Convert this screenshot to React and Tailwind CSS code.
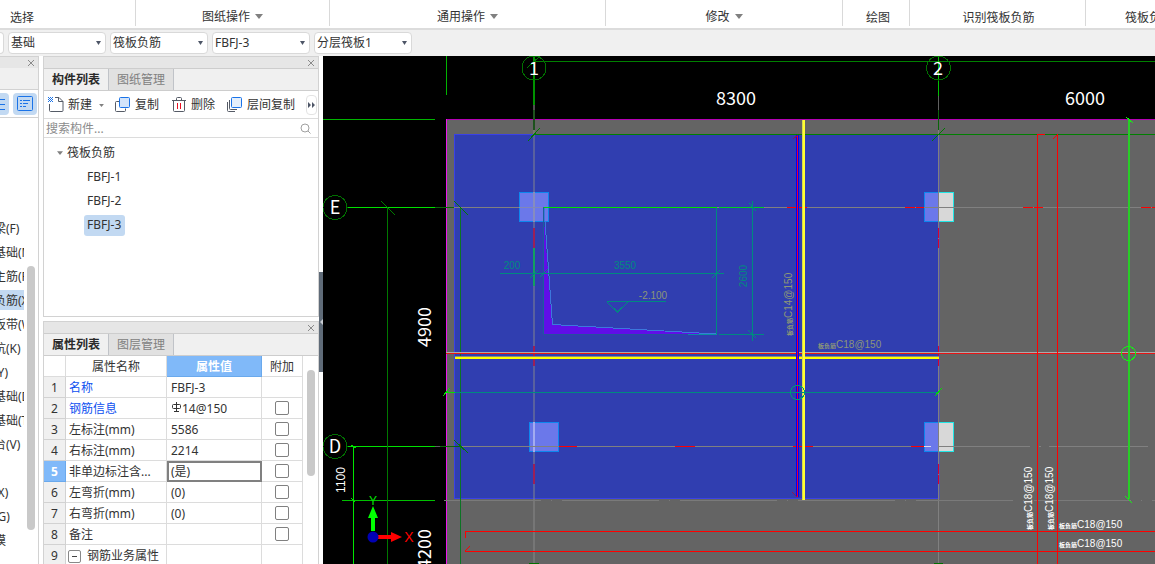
import React from "react";

const groups = [
  { label: "选择", box: "w-[136px] pl-[10px]" },
  { label: "图纸操作", menu: true, box: "w-[194px] justify-center" },
  { label: "通用操作", menu: true, box: "w-[276px] justify-center" },
  { label: "修改", menu: true, box: "w-[237px] justify-center" },
  { label: "绘图", box: "w-[67px] justify-center pl-[4px]" },
  { label: "识别筏板负筋", box: "w-[176px] justify-center pl-[2px]" },
  { label: "筏板负筋二次编辑", box: "flex-1 pl-[39px]" },
];

const pickers = [
  { name: "楼层", value: "基础" },
  { name: "构件类型", value: "筏板负筋" },
  { name: "构件", value: "FBFJ-3" },
  { name: "分层", value: "分层筏板1" },
];

const nav = [
  "基础梁(F)", "筏板基础(M)", "筏板主筋(R)", "筏板负筋(X)", "基础板带(W)", "集水坑(K)", "柱墩(Y)",
  "独立基础(D)", "条形基础(T)", "桩承台(V)", "其它", "垫层(X)", "地沟(G)", "砖胎模",
];

const props = [
  { name: "名称", value: "FBFJ-3", link: true, box: false },
  { name: "钢筋信息", value: "14@150", link: true, box: true, bar: true },
  { name: "左标注(mm)", value: "5586", box: true },
  { name: "右标注(mm)", value: "2214", box: true },
  { name: "非单边标注含...", value: "(是)", box: true, active: true },
  { name: "左弯折(mm)", value: "(0)", box: true },
  { name: "右弯折(mm)", value: "(0)", box: true },
  { name: "备注", value: "", box: true },
  { name: "钢筋业务属性", value: "", box: false, group: true },
];

function Caret({ className }) {
  return (
    <svg width="8" height="5" viewBox="0 0 8 5" className={className} aria-hidden="true">
      <path d="M0 0h8L4 5z" fill="currentColor" />
    </svg>
  );
}

function CloseBar({ label }) {
  return (
    <div className="flex h-[12px] shrink-0 items-center justify-end border-t border-[#d2d2d2] bg-[#e6e6e6] pr-[3px]">
      <button aria-label={label} className="text-[#8a8a8a]">
        <svg width="8" height="8" viewBox="0 0 8 8" aria-hidden="true">
          <path d="M1 1l6 6M7 1L1 7" stroke="currentColor" fill="none" />
        </svg>
      </button>
    </div>
  );
}

function Tabs({ items }) {
  return (
    <div role="tablist" className="flex h-[23px] shrink-0 border-y border-[#cdcdcd] bg-[#f0f0f0]">
      {items.map((t, i) => (
        <button
          key={t}
          role="tab"
          aria-selected={i === 0}
          className={
            i === 0
              ? "w-[65px] border-r border-[#c0c3c8] bg-[#f0f0f0] font-bold text-[#2a2a2a]"
              : "w-[65px] border-r border-[#c0c3c8] bg-[#e1e1e1] text-[#808080]"
          }
        >
          {t}
        </button>
      ))}
    </div>
  );
}

function NewIcon() {
  return (
    <svg width="16" height="16" viewBox="0 0 16 16" fill="none" aria-hidden="true">
      <path d="M7 .5h4l4 4v9q0 1-1 1H2.500q-1 0-1-1V7" stroke="#555b66" />
      <path d="M10.500 .5v4h4.500" stroke="#555b66" />
      <path d="M0 0h1v1H0zM2 0h1v1H2zM4 0h1v1H4zM1 1h1v1H1zM3 1h1v1H3zM0 2h1v1H0zM2 2h1v1H2zM4 2h1v1H4zM1 3h1v1H1zM3 3h1v1H3zM0 4h1v1H0zM2 4h1v1H2zM4 4h1v1H4z" fill="#1a73e8" />
    </svg>
  );
}

function CopyIcon() {
  return (
    <svg width="16" height="16" viewBox="0 0 16 16" fill="none" aria-hidden="true">
      <path d="M4.500 4.500h-3q-1 0-1 1v8q0 1 1 1h8q1 0 1-1v-2" stroke="#555b66" />
      <rect x="4.500" y=".5" width="10" height="10" rx="1" fill="#d3e4fa" stroke="#1a73e8" />
    </svg>
  );
}

function LayerCopyIcon() {
  return (
    <svg width="16" height="16" viewBox="0 0 16 16" fill="none" aria-hidden="true">
      <path d="M.5 5v8.500q0 1 1 1H8M2.500 3v8.500q0 1 1 1H10" stroke="#555b66" />
      <rect x="4.500" y=".5" width="10" height="10" rx="1" fill="#e4effc" stroke="#1a73e8" />
    </svg>
  );
}

function TrashIcon() {
  return (
    <svg width="14" height="16" viewBox="0 0 14 16" fill="none" aria-hidden="true">
      <path d="M0 3.500h14M4.500 3V1.500q0-1 1-1h3q1 0 1 1V3M1.500 4v9.500q0 1 1 1h9q1 0 1-1V4" stroke="#555b66" />
      <path d="M5.500 6v6M8.500 6v6" stroke="#e81123" />
    </svg>
  );
}

function H({ x, to, y, w = 1, c }) {
  return <rect x={x} y={y} width={to - x} height={w} fill={c} />;
}

function V({ x, y, to, w = 1, c }) {
  return <rect x={x} y={y} width={w} height={to - y} fill={c} />;
}

function Tick({ d, c = "#007a00", w = 1 }) {
  return <path d={d} stroke={c} strokeWidth={w} fill="none" />;
}

const dim = { fontFamily: '"Noto Sans CJK SC", "Noto Sans", sans-serif', fontSize: 18, fill: "#fff" };
const cad = { fontFamily: '"Liberation Sans", sans-serif', fontSize: 10 };

function RebarNote({ x, y, upright, kind, color }) {
  return (
    <g transform={upright ? `translate(${x} ${y}) rotate(-90)` : `translate(${x} ${y})`} fill={color}>
      <text style={cad}>
        <tspan style={{ fontFamily: '"Noto Sans CJK SC", sans-serif', fontSize: 6, fontWeight: 700 }}>板负筋</tspan>
        {kind}@150
      </text>
    </g>
  );
}

function Plan() {
  const gray = "#808080";
  const teal = "#008a80";
  const lime = "#00e000";
  const red = "#ff0000";
  return (
    <svg className="block h-full w-full" role="img" aria-label="筏板负筋平面图">
      <g transform="translate(-323 -56)" shapeRendering="crispEdges">
        <rect x="447" y="120" width="3000" height="3000" fill="#646464" />
        <rect x="454" y="135" width="485" height="364" fill="#303eb0" />
        <V x={454} y={134} to={499} c="#3a41e6" />
        <H x={454} to={534} y={134} c="#3a41e6" />
        <H x={454} to={939} y={498} c="#3a41e6" />
        <V x={939} y={135} to={499} c="#5555a4" />
        <H x={446} to={3000} y={119} c="#b400b4" />
        <V x={446} y={119} to={3000} c="#f014f0" />
        <V x={446} y={56} to={95} c="#00b400" />
        <H x={323} to={435} y={119} c="#00b400" />

        <H x={534} to={3000} y={61} c="#008000" />
        <H x={534} to={3000} y={134} c="#008000" />
        <V x={533} w={2} y={56} to={105} c="#009200" />
        <V x={533} w={2} y={105} to={110} c="#505050" />
        <V x={533} w={2} y={110} to={130} c="#1d521d" />
        <V x={533} w={2} y={130} to={3000} c="rgba(140,140,140,0.45)" />
        <V x={533} w={2} y={228} to={248} c="#9c2058" />
        <V x={533} w={2} y={248} to={286} c="#12a060" />
        <V x={533} w={2} y={346} to={366} c="#9c2058" />
        <V x={533} w={2} y={464} to={484} c="#9c2058" />
        <V x={938} y={56} to={96} c="#00c000" />
        <V x={938} y={96} to={110} c="#606060" />
        <V x={938} y={110} to={130} c="#0a640a" />
        <V x={938} y={130} to={3000} c={gray} />

        <H x={347} to={435} y={207} c={lime} />
        <H x={435} to={454} y={207} c="#0a640a" />
        <H x={454} to={3000} y={207} c={gray} />
        <H x={347} to={435} y={446} c={lime} />
        <H x={435} to={440} y={446} c="#606060" />
        <H x={440} to={461} y={446} c="#0a640a" />
        <H x={461} to={1030} y={446} c={gray} />
        <H x={1039} to={1041} y={446} c={gray} />
        <H x={1049} to={1148} y={446} c={gray} />
        <H x={342} to={435} y={500} c="#00c000" />
        <path d="M444 500.5H3000" stroke="#7a7a7a" strokeDasharray="97 10 1 10" />
        <V x={353} y={446} to={3000} c="#00e600" />
        <V x={387} y={207} to={3000} c="#007800" />
        <V x={460} y={207} to={3000} c="#0c7424" />
        <Tick d="M381 201l14 14M454 201l14 14M454 440l14 13" />
        <Tick d="M528 141l12-13M932 141l13-13M527 68l13-12" />
        <Tick d="M351 445l5 3M351 498l4 4" c={lime} />

        <g stroke="none">
          <rect x="519" y="192" width="30" height="30" fill="#0d86ee" />
          <rect x="520" y="193" width="28" height="28" fill="#6b78ea" />
          <rect x="529" y="422" width="30" height="30" fill="#0d86ee" />
          <rect x="530" y="423" width="28" height="28" fill="#6b78ea" />
          {[192, 422].map((y) => (
            <g key={y}>
              <rect x="924" y={y} width="15" height="30" fill="#0d86ee" />
              <rect x="925" y={y + 1} width="14" height="28" fill="#6b78ea" />
              <rect x="939" y={y} width="15" height="30" fill="#20e6e6" />
              <rect x="939" y={y + 1} width="14" height="28" fill="#d8d8d8" />
            </g>
          ))}
        </g>
        <V x={533} w={2} y={192} to={222} c="#868cc0" />
        <V x={533} w={2} y={422} to={452} c="#a3abf0" />
        <H x={519} to={549} y={207} c="#8088b8" />
        <H x={529} to={559} y={446} c={gray} />
        <V x={938} y={192} to={222} c={gray} />
        <V x={938} y={422} to={452} c={gray} />
        <H x={924} to={954} y={207} c={gray} />
        <H x={939} to={954} y={446} c={gray} />
        <H x={924} to={931} y={446} c="#dadaf0" />

        {[787, 905, 1023, 1141].map((x) => (
          <g key={x}>
            <H x={x} to={x + 10} y={207} c={red} />
            <H x={x + 11} to={x === 905 ? 924 : x + 20} y={207} c={red} />
          </g>
        ))}
        <H x={559} to={577} y={446} c={red} />
        {[675, 793].map((x) => (
          <H key={x} x={x} to={x + 20} y={446} c={red} />
        ))}
        <H x={911} to={924} y={446} c={red} />
        {[228, 346, 464].map((y) => (
          <g key={y}>
            <V x={938} y={y} to={y + 10} c="#d80030" />
            <V x={938} y={y + 11} to={y + 20} c="#d80030" />
          </g>
        ))}

        <path d="M543 207L552 325L716 334H543z" fill="#600ee8" />
        <path d="M544 207L552.5 324.500L716 334" stroke="#3c78dc" fill="none" />
        <V x={543} y={207} to={334} c="#1a5f9c" />
        <V x={716} y={207} to={335} c={teal} />
        <H x={543} to={716} y={334} c="#2550a0" />
        <H x={688} to={717} y={334} c="#0a90a0" />
        <H x={544} to={717} y={207} c={lime} />
        <H x={719} to={764} y={207} c="#00d020" />
        <H x={719} to={764} y={334} c={teal} />
        <V x={752} y={201} to={341} c={teal} />
        <H x={500} to={724} y={273} c={teal} />
        <Tick d="M530 278l8-8M540 277l8-8M712 278l8-8M749 203l7 8M748 330l8 8" c={teal} />
        <H x={607} to={666} y={301} c={teal} />
        <Tick d="M607 302l10.500 10l10.500-10" c={teal} />

        <H x={446} to={3000} y={352} c="#aaaaaa" />
        <H x={446} to={3000} y={353} c="#e81414" />
        <H x={455} to={939} y={356} c="#8c8c78" />
        <H x={455} to={939} y={357} w={2} c="#ffff00" />
        <V x={796} w={3} y={135} to={497} c="#0000ff" />
        <V x={797} y={135} to={497} c="#f00020" />
        <V x={802} w={3} y={120} to={500} c="#ffff30" />
        <V x={802} y={120} to={500} c="#d8d850" />
        <Tick d="M793 139l5-4M792 492l5 5" c="#8c145a" />
        <H x={446} to={455} y={392} c={lime} />
        <H x={455} to={939} y={392} c={teal} />
        <Tick d="M443 396l7-8M935 396l7-8" c={lime} />
        <circle cx="797.5" cy="392.5" r="7" fill="none" stroke="#009a74" />

        <V x={1037} y={134} to={3000} c={red} />
        <V x={1057} y={134} to={3000} c={red} />
        <H x={1037} to={1045} y={134} c={red} />
        <H x={465} to={3000} y={531} c={red} />
        <H x={465} to={3000} y={551} c={red} />
        <V x={465} y={531} to={538} c={red} />
        <Tick d="M1053 139l5-5M465 551l5-5" c={red} />
        <V x={1128} w={2} y={120} to={499} c="#28cd28" />
        <Tick d="M1126 117l7 6M1125 496l7 7" c="#14f014" />
        <circle cx="1128.5" cy="353.5" r="7" fill="none" stroke="#14f014" />

        <g fill="none" stroke="#007000">
          <circle cx="534" cy="68" r="12" />
          <circle cx="938.5" cy="68" r="12" />
          <circle cx="335" cy="207.5" r="12" />
          <circle cx="335" cy="446.5" r="12" />
          <circle cx="534" cy="575" r="12" />
          <circle cx="938.5" cy="575" r="12" />
        </g>

        <g shapeRendering="geometricPrecision">
          <path d="M371 531V518h-3l5-12l5 12h-3v13z" fill="#00ff00" />
          <path d="M378 535h13v-3l11 5l-11 5v-3h-13z" fill="#ff0000" />
          <circle cx="373" cy="537" r="5.500" fill="#0000b4" />
        </g>
      </g>
      <g transform="translate(-323 -56)" textAnchor="middle">
        <text x="534" y="75" style={dim}>1</text>
        <text x="938" y="75" style={dim}>2</text>
        <text x="335" y="214" style={dim}>E</text>
        <text x="335" y="453" style={dim}>D</text>
        <text x="736" y="105" style={dim}>8300</text>
        <text x="1085" y="105" style={dim}>6000</text>
        <text transform="translate(431 327) rotate(-90)" style={dim}>4900</text>
        <text transform="translate(431 549) rotate(-90)" style={dim}>4200</text>
        <text transform="translate(345 480) rotate(-90)" style={{ ...cad, fontSize: 12 }} fill="#fff">1100</text>
        <text x="373" y="505" style={{ ...cad, fontSize: 12 }} fill="#00e600">Y</text>
        <text x="409" y="542" style={{ ...cad, fontSize: 14 }} fill="#ff0000">X</text>
        <text x="512" y="269" style={cad} fill={teal}>200</text>
        <text x="625" y="269" style={cad} fill={teal}>3550</text>
        <text x="653" y="299" style={cad} fill="#8c9678">-2.100</text>
        <text transform="translate(747 276) rotate(-90)" style={cad} fill={teal}>2600</text>
      </g>
      <g transform="translate(-323 -56)">
        <RebarNote x={792} y={336} upright kind="C14" color="#8c9678" />
        <RebarNote x={818} y={348} kind="C18" color="#8c9678" />
        <RebarNote x={1032} y={530} upright kind="C18" color="#fff" />
        <RebarNote x={1053} y={530} upright kind="C18" color="#fff" />
        <RebarNote x={1059} y={528} kind="C18" color="#fff" />
        <RebarNote x={1059} y={547} kind="C18" color="#fff" />
      </g>
    </svg>
  );
}

export default function App() {
  return (
    <div className="flex h-screen flex-col overflow-hidden bg-white font-['Noto_Sans','Noto_Sans_CJK_SC',sans-serif] text-[12px] leading-[16px] text-[#333333]">
      <header className="flex h-[30px] shrink-0 border-b-2 border-[#dcdcdc] bg-white">
        {groups.map((g, i) => (
          <div
            key={g.label}
            className={`flex h-[26px] shrink-0 items-center overflow-hidden whitespace-nowrap ${g.menu ? "pt-[7px]" : "pt-[9px]"} ${g.box} ${i < groups.length - 1 ? "border-r border-[#d9d9d9]" : ""}`}
          >
            {g.menu ? (
              <button className="flex items-center gap-[5px]">
                {g.label}
                <Caret className="text-[#808080]" />
              </button>
            ) : (
              <span>{g.label}</span>
            )}
          </div>
        ))}
      </header>

      <div className="flex h-[26px] shrink-0 items-center gap-1 bg-[#f0f0f0]">
        <span className="-ml-px h-[22px] w-[5px] rounded-r border border-l-0 border-[#d9d9d9] bg-white" />
        {pickers.map((p) => (
          <div key={p.name} className="relative">
            <select
              aria-label={p.name}
              defaultValue={p.value}
              className="block h-[22px] w-[98px] appearance-none rounded border border-[#d9d9d9] bg-white pl-[2px]"
            >
              <option>{p.value}</option>
            </select>
            <svg width="5" height="4" viewBox="0 0 5 4" className="pointer-events-none absolute top-[9px] right-[5px]" aria-hidden="true">
              <path d="M0 0h5L2.500 4z" fill="#4d5566" />
            </svg>
          </div>
        ))}
      </div>

      <main className="flex min-h-0 flex-1">
        <aside className="flex w-[39px] shrink-0 flex-col border-r border-[#d2d2d2]">
          <CloseBar label="关闭模块导航" />
          <div className="h-[22px] shrink-0 border-b border-[#d2d2d2] bg-[#f0f0f0]" />
          <div className="flex h-[28px] shrink-0 items-center gap-1 border-b border-[#d2d2d2]">
            <button aria-label="图标视图" className="flex h-[22px] w-[9px] items-center justify-end overflow-hidden rounded-r bg-[#c2d9f2] pr-1">
              <svg width="5" height="14" viewBox="0 0 5 14" aria-hidden="true">
                <path d="M0 2.500h5M0 7.500h5M0 12.500h5" stroke="#1a73e8" />
              </svg>
            </button>
            <button aria-label="列表视图" className="flex h-[22px] w-[24px] items-center justify-center rounded bg-[#c2d9f2]">
              <svg width="16" height="16" viewBox="0 0 16 16" fill="none" stroke="#1a73e8" aria-hidden="true">
                <rect x=".5" y=".5" width="15" height="14" rx="1" />
                <path d="M3 4.500h2M6 4.500h7M3 7.500h2M6 7.500h5M3 10.500h2M6 10.500h3" />
              </svg>
            </button>
          </div>
          <div className="flex min-h-0 flex-1 pt-[98px]">
            <ul className="w-[24px] shrink-0 overflow-hidden whitespace-nowrap">
              {nav.map((n, i) => (
                <li key={n} className={i === 3 ? "my-[2px] flex h-[20px] items-center bg-[#c2d9f2] pt-[2px]" : "flex h-[24px] items-center pt-[2px]"}>
                  <span className="-ml-[30px]">{n}</span>
                </li>
              ))}
            </ul>
            <div className="mt-[50px] ml-[3px] h-[264px] w-[8px] shrink-0 rounded-full bg-[#c9c9c9]" />
          </div>
        </aside>

        <div className="ml-1 flex w-[276px] shrink-0 flex-col gap-1">
          <section className="flex h-[261px] shrink-0 flex-col border border-t-0 border-[#d2d2d2]">
            <CloseBar label="关闭构件列表" />
            <Tabs items={["构件列表", "图纸管理"]} />
            <div className="flex h-[28px] shrink-0 items-center border-b border-[#dcdcdc] pt-px pl-[4px] whitespace-nowrap">
              <button className="flex items-center gap-[4px]"><NewIcon />新建</button>
              <Caret className="ml-[7px] h-[3px] w-[5px] text-[#808080]" />
              <button className="ml-[11px] flex items-center gap-[4px]"><CopyIcon />复制</button>
              <button className="ml-[13px] flex items-center gap-[5px]"><TrashIcon />删除</button>
              <button className="ml-[12px] flex items-center gap-[4px]"><LayerCopyIcon />层间复制</button>
              <button aria-label="更多" className="mr-px ml-auto flex h-[20px] w-[11px] items-center justify-center rounded border border-[#e3e3e3]">
                <svg width="7" height="6" viewBox="0 0 7 6" aria-hidden="true">
                  <path d="M0 0l3 3l-3 3zM4 0l3 3l-3 3z" fill="#4d5566" />
                </svg>
              </button>
            </div>
            <div className="flex h-[19px] shrink-0 items-center border-b border-[#dcdcdc] pt-px pr-[7px] pl-[2px]">
              <input aria-label="搜索构件" placeholder="搜索构件..." className="h-[16px] min-w-0 flex-1 bg-transparent outline-none placeholder:text-[#8c8c8c]" />
              <svg width="11" height="11" viewBox="0 0 11 11" fill="none" stroke="#a0a0a0" aria-hidden="true">
                <circle cx="5" cy="5" r="4" />
                <path d="M8 8l2.500 2.500" />
              </svg>
            </div>
            <div className="flex flex-col items-start pt-[3px]">
              <div className="flex h-[24px] items-center gap-[4px] pl-[13px]">
                <Caret className="h-[4px] w-[6px] text-[#808080]" />
                筏板负筋
              </div>
              {["FBFJ-1", "FBFJ-2", "FBFJ-3"].map((n, i) => (
                <div key={n} className="flex h-[24px] items-center pl-[40px]">
                  <button className={i === 2 ? "h-[21px] rounded-[3px] bg-[#c2d9f2] pr-[4px] pl-[3px]" : "h-[21px] px-[3px]"}>{n}</button>
                </div>
              ))}
            </div>
          </section>

          <section className="flex min-h-0 flex-1 flex-col overflow-hidden border-x border-[#d2d2d2]">
            <CloseBar label="关闭属性列表" />
            <Tabs items={["属性列表", "图层管理"]} />
            <div className="flex min-h-0 flex-1 overflow-hidden">
              <table className="h-fit w-[259px] shrink-0 table-fixed border-separate border-spacing-0 leading-[16px]">
                <colgroup>
                  <col className="w-[22px]" />
                  <col className="w-[101px]" />
                  <col className="w-[95px]" />
                  <col className="w-[41px]" />
                </colgroup>
                <thead>
                  <tr className="h-[21px]">
                    <th className="border-r border-b border-[#dcdcdc] p-0" aria-label="序号" />
                    <th className="border-r border-b border-[#dcdcdc] p-0 pt-px font-normal">属性名称</th>
                    <th className="border-r border-b border-[#6aa9ec] bg-[#80b9f9] p-0 pt-px font-bold text-white">属性值</th>
                    <th className="border-r border-b border-[#dcdcdc] p-0 pt-px font-normal">附加</th>
                  </tr>
                </thead>
                <tbody>
                  {props.map((p, i) => (
                    <tr key={p.name} className="h-[21px]">
                      <td className={p.active ? "border-r border-b border-[#6aa9ec] bg-[#80b9f9] p-0 pt-px text-center font-bold text-white" : "border-r border-b border-[#d2d2d2] bg-[#f0f0f0] p-0 pt-px text-center"}>
                        {i + 1}
                      </td>
                      <td className={`border-r border-b border-[#dcdcdc] p-0 pt-[2px] pl-[3px] whitespace-nowrap ${p.link ? "text-[#0d50f0]" : ""}`}>
                        {p.group ? (
                          <span className="flex items-center gap-[5px]">
                            <button aria-label="折叠" className="flex h-[13px] w-[13px] -translate-x-px items-center justify-center rounded-[2px] border border-[#888888] bg-white">
                              <span className="h-px w-[5px] bg-[#444444]" />
                            </button>
                            {p.name}
                          </span>
                        ) : (
                          p.name
                        )}
                      </td>
                      <td className={p.active ? "border-2 border-[#808080] p-0 pl-[2px]" : "border-r border-b border-[#dcdcdc] p-0 pt-px pl-[4px]"}>
                        {p.bar ? (
                          <span className="flex items-center gap-px">
                            <svg width="10" height="11" viewBox="0 0 10 11" fill="none" stroke="#333333" className="mb-[3px]" aria-hidden="true">
                              <path d="M5.500 0v10M1.500 3.500q0-1 1-1h6q1 0 1 1v2q0 1-1 1h-6q-1 0-1-1zM3 9.500h5" />
                            </svg>
                            {p.value}
                          </span>
                        ) : (
                          p.value
                        )}
                      </td>
                      <td className="border-r border-b border-[#dcdcdc] p-0">
                        {p.box && (
                          <input type="checkbox" aria-label={`${p.name} 附加`} className="mx-auto block h-[14px] w-[14px] appearance-none rounded-[2px] border border-[#808080] bg-white checked:bg-[#80b9f9]" />
                        )}
                      </td>
                    </tr>
                  ))}
                </tbody>
              </table>
              <div className="mt-[14px] ml-[4px] h-[106px] w-[8px] rounded-full bg-[#c9c9c9]" />
            </div>
          </section>
        </div>

        <div className="flex w-[4px] shrink-0 flex-col pt-[216px]">
          <button aria-label="收起面板" className="flex h-[100px] w-[4px] items-center justify-end bg-[#5f6b78]">
            <svg width="3" height="6" viewBox="0 0 3 6" aria-hidden="true">
              <path d="M3 0v6L0 3z" fill="#c8ccd2" />
            </svg>
          </button>
        </div>

        <div className="min-w-0 flex-1 overflow-hidden bg-black">
          <Plan />
        </div>
      </main>
    </div>
  );
}
